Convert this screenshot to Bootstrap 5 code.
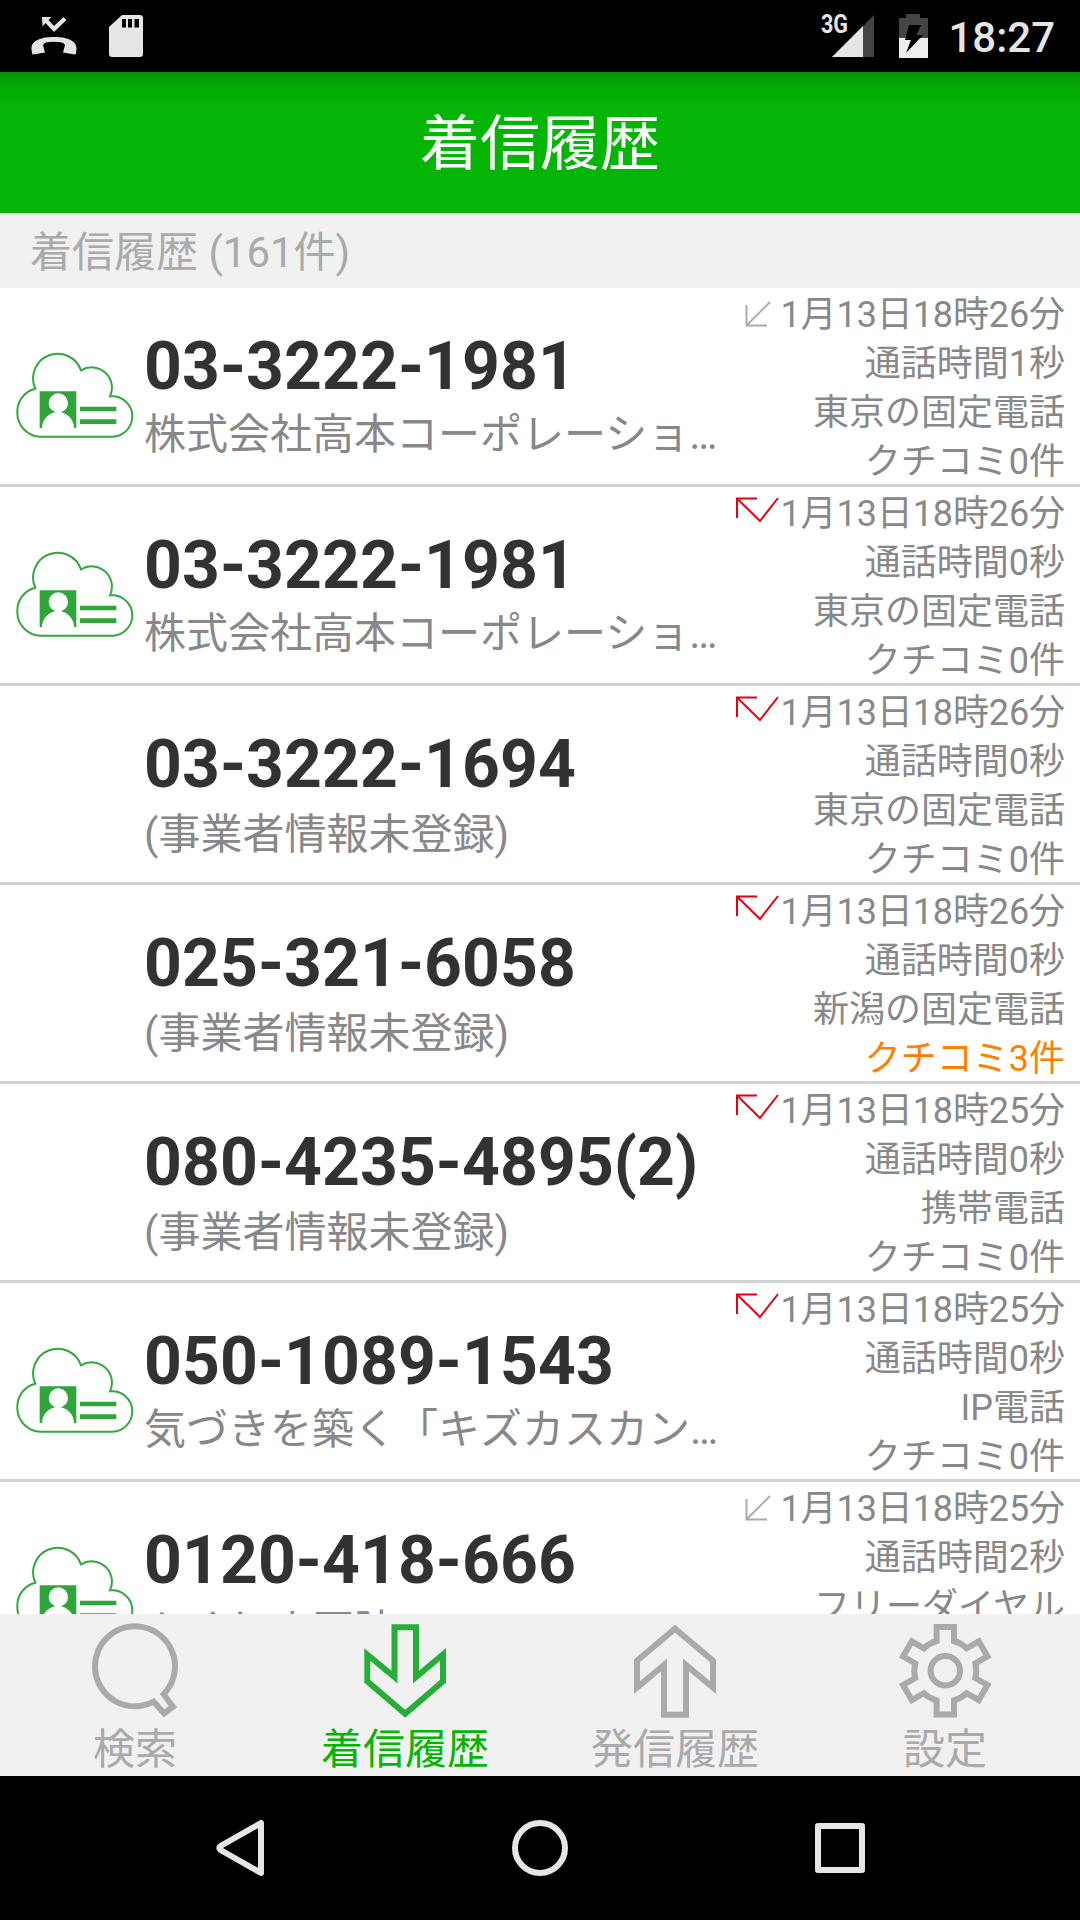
<!DOCTYPE html>
<html lang="ja">
<head>
<meta charset="utf-8">
<meta name="viewport" content="width=device-width, initial-scale=1">
<title>着信履歴</title>
<link href="https://cdn.jsdelivr.net/npm/bootstrap@5.3.0/dist/css/bootstrap.min.css" rel="stylesheet">
<style>
  body { font-family: Roboto, "Noto Sans CJK JP", sans-serif; background: #fff; }
  svg { display: block; flex: none; }
  .screen { width: 1080px; height: 1920px; }
  .statusbar { height: 72px; background: #000; color: #e5e5e5; padding: 0 25px 0 30px; }
  .sdcard { margin-left: 30px; }
  .battery { margin: 0 20px 0 23px; }
  .clock { font-size: 42px; font-weight: 500; line-height: 75px; height: 72px; }
  .titlebar { height: 141px; background: linear-gradient(#059105 0, #05a605 12px, #04b204 28px, #05b505 40px); color: #fff; font-size: 60px; line-height: 146px; }
  .section-label { height: 75px; background: #f1f1f1; color: #aaa; font-size: 42px; line-height: 79px; padding-left: 30px; }
  .calls { flex: 1 1 0; min-height: 0; }
  .call { height: 199px; border-bottom: 3px solid #d2d2d2; padding: 0 15px; }
  .thumb { width: 120px; padding-top: 63px; }
  .who { width: 587px; padding: 41px 0 0 9px; }
  .num { font-size: 66px; font-weight: 700; line-height: 76px; letter-spacing: .1px; color: #323232; white-space: nowrap; }
  .biz { font-size: 42px; line-height: 64px; color: #888; white-space: nowrap; }
  .biz.cut { line-height: 60px; }
  .meta { font-size: 36px; line-height: 49px; color: #888; white-space: nowrap; padding-top: 3px; }
  .when { letter-spacing: -.1px; }
  .dir { margin: -3px 1px 0 0; }
  .hot { color: #ff8000; }
  .tabs { height: 162px; background: #f1f1f1; color: #aaa; }
  .tabs a { flex: 1 1 0; color: inherit; font-size: 42px; line-height: 62px; padding-top: 9px; }
  .tabs a.on { color: #05b505; }
  .softkeys { height: 144px; background: #000; padding: 0 90px; }
</style>
<script src="https://cdn.jsdelivr.net/npm/bootstrap@5.3.0/dist/js/bootstrap.bundle.min.js"></script>
</head>
<body>
<svg width="0" height="0" class="position-absolute">
  <defs>
    <symbol id="cloud" viewBox="45 210 360 270">
      <path d="M106 323A73.900 73.900 0 1 1 243 268A61 61 0 0 1 330 346A61 60 0 0 1 397 406A61 61 0 0 1 337 467H122A71 71 0 0 1 52 395A71 71 0 0 1 106 323Z" fill="#fff" stroke="#33a83d" stroke-width="6"/>
      <path d="M119 331H229V441H222A48 48 0 0 0 126 441H119ZM240 377H349V391H240ZM240 415H349V429H240Z" fill="#2fa53a"/>
      <circle cx="175" cy="366" r="29" fill="#fff"/>
    </symbol>
    <symbol id="incoming" viewBox="0 0 44 40"><path d="M11.500 17V37.500H32M12 37L35 14" fill="none" stroke="#aaa" stroke-width="1.900"/></symbol>
    <symbol id="missed" viewBox="0 0 44 40"><path d="M2 31V11.500H22M2 11.500L25 34L43 11" fill="none" stroke="#e60012" stroke-width="2"/></symbol>
  </defs>
</svg>
<div class="screen d-flex flex-column overflow-hidden">
  <header class="statusbar d-flex align-items-center">
    <svg width="48" height="72" viewBox="0 0 48 72" fill="#e5e5e5"><path d="M12 17H21.500L18.500 20L24 26L33.500 17L36.500 20L24 32L15.500 23L12.500 26.500Z"/><path d="M1.500 49C1 40 12 37 24 37S47 40 46.500 49L46 53Q46 54.500 44.500 54.500L33 52.500L35 45Q34 41.700 24 41.700T13 45L15 52.500L3.500 54.500Q2 54.500 2 53Z"/></svg>
    <svg width="36" height="72" viewBox="0 0 36 72" class="sdcard me-auto"><path d="M14 15H32Q35 15 35 18V54Q35 57 32 57H4Q1 57 1 54V27Z" fill="#e5e5e5"/><path d="M14 19H18V27.500H14ZM20 19H24V27.500H20ZM26.500 19H31V27.500H26.500Z"/></svg>
    <svg width="56" height="72" viewBox="0 0 56 72"><path d="M12 57L54 15V57Z" fill="#444"/><path d="M12 57L43 26V57Z" fill="#e5e5e5"/><text x="1" y="33" font-family="Roboto" font-weight="700" font-size="25" textLength="27" lengthAdjust="spacingAndGlyphs" fill="#e5e5e5">3G</text></svg>
    <svg width="29" height="72" viewBox="0 0 29 72" class="battery"><path d="M0 38V18H7V14H21V18H29V38Z" fill="#444"/><path d="M0 38H29V58H0Z" fill="#eee"/><path d="M10 25H22L17.500 35H24L7 53L12 40H6Z" fill="#000"/></svg>
    <span class="clock">18:27</span>
  </header>
  <h1 class="titlebar text-center fw-normal mb-0">着信履歴</h1>
  <div class="section-label">着信履歴 (161件)</div>
  <main class="calls overflow-hidden">
    <article class="call d-flex">
      <div class="thumb"><svg width="120" height="90"><use href="#cloud"/></svg></div>
      <div class="who"><div class="num">03-3222-1981</div><div class="biz cut">株式会社高本コーポレーショ…</div></div>
      <div class="meta ms-auto text-end"><div class="when d-flex"><svg class="dir" width="44" height="40"><use href="#incoming"/></svg>1月13日18時26分</div><div>通話時間1秒</div><div>東京の固定電話</div><div>クチコミ0件</div></div>
    </article>
    <article class="call d-flex">
      <div class="thumb"><svg width="120" height="90"><use href="#cloud"/></svg></div>
      <div class="who"><div class="num">03-3222-1981</div><div class="biz cut">株式会社高本コーポレーショ…</div></div>
      <div class="meta ms-auto text-end"><div class="when d-flex"><svg class="dir" width="44" height="40"><use href="#missed"/></svg>1月13日18時26分</div><div>通話時間0秒</div><div>東京の固定電話</div><div>クチコミ0件</div></div>
    </article>
    <article class="call d-flex">
      <div class="thumb"></div>
      <div class="who"><div class="num">03-3222-1694</div><div class="biz">(事業者情報未登録)</div></div>
      <div class="meta ms-auto text-end"><div class="when d-flex"><svg class="dir" width="44" height="40"><use href="#missed"/></svg>1月13日18時26分</div><div>通話時間0秒</div><div>東京の固定電話</div><div>クチコミ0件</div></div>
    </article>
    <article class="call d-flex">
      <div class="thumb"></div>
      <div class="who"><div class="num">025-321-6058</div><div class="biz">(事業者情報未登録)</div></div>
      <div class="meta ms-auto text-end"><div class="when d-flex"><svg class="dir" width="44" height="40"><use href="#missed"/></svg>1月13日18時26分</div><div>通話時間0秒</div><div>新潟の固定電話</div><div class="hot">クチコミ3件</div></div>
    </article>
    <article class="call d-flex">
      <div class="thumb"></div>
      <div class="who"><div class="num">080-4235-4895(2)</div><div class="biz">(事業者情報未登録)</div></div>
      <div class="meta ms-auto text-end"><div class="when d-flex"><svg class="dir" width="44" height="40"><use href="#missed"/></svg>1月13日18時25分</div><div>通話時間0秒</div><div>携帯電話</div><div>クチコミ0件</div></div>
    </article>
    <article class="call d-flex">
      <div class="thumb"><svg width="120" height="90"><use href="#cloud"/></svg></div>
      <div class="who"><div class="num">050-1089-1543</div><div class="biz cut">気づきを築く「キズカスカン…</div></div>
      <div class="meta ms-auto text-end"><div class="when d-flex"><svg class="dir" width="44" height="40"><use href="#missed"/></svg>1月13日18時25分</div><div>通話時間0秒</div><div>IP電話</div><div>クチコミ0件</div></div>
    </article>
    <article class="call d-flex">
      <div class="thumb"><svg width="120" height="90"><use href="#cloud"/></svg></div>
      <div class="who"><div class="num">0120-418-666</div><div class="biz">ふくしま医院</div></div>
      <div class="meta ms-auto text-end"><div class="when d-flex"><svg class="dir" width="44" height="40"><use href="#incoming"/></svg>1月13日18時25分</div><div>通話時間2秒</div><div>フリーダイヤル</div><div>クチコミ0件</div></div>
    </article>
  </main>
  <nav class="tabs d-flex">
    <a class="d-flex flex-column align-items-center text-decoration-none"><svg width="96" height="96" viewBox="0.800 -0.700 96 96" fill="none" stroke="#aaa" stroke-width="6"><path d="M67.500 78A40 40 0 1 1 77.500 70.500L86.700 83L78 89.700Z"/></svg><span>検索</span></a>
    <a class="on d-flex flex-column align-items-center text-decoration-none"><svg width="96" height="96" viewBox="0 0 96 96" fill="none" stroke="#27ae3a" stroke-width="6"><path d="M37.500 4.300H59V54L86 31.500V58.300L48.200 90.800L10.300 58.300V31.500L37.500 54Z"/></svg><span>着信履歴</span></a>
    <a class="d-flex flex-column align-items-center text-decoration-none"><svg width="96" height="96" viewBox="0 0 96 96" fill="none" stroke="#aaa" stroke-width="6"><path d="M37 91.700H59V42L86 64.500V37.700L48 5.700L10 37.700V64.500L37 42Z"/></svg><span>発信履歴</span></a>
    <a class="d-flex flex-column align-items-center text-decoration-none"><svg width="96" height="96" viewBox="-48.300 -47.700 96 96" fill="none" stroke="#aaa" stroke-width="6"><circle r="14.700"/><path d="M-8.700 -29.700V-43.700H8.700V-29.700A31 31 0 0 1 21.400 -22.400L33.500 -29.400L42.200 -14.300L30.050 -7.300A31 31 0 0 1 30.050 7.300L42.200 14.300L33.500 29.400L21.400 22.400A31 31 0 0 1 8.700 29.700V43.700H-8.700V29.700A31 31 0 0 1 -21.400 22.400L-33.500 29.400L-42.200 14.300L-30.050 7.300A31 31 0 0 1 -30.050 -7.300L-42.200 -14.300L-33.500 -29.400L-21.400 -22.400A31 31 0 0 1 -8.700 -29.700Z"/></svg><span>設定</span></a>
  </nav>
  <footer class="softkeys d-flex align-items-center justify-content-around">
    <svg width="60" height="60" viewBox="0 0 60 60" fill="none" stroke="#e6e6e6" stroke-width="6" stroke-linejoin="round"><path d="M51 5V55L10.500 32Q8 30 10.500 28Z"/></svg>
    <svg width="60" height="60" viewBox="0 0 60 60" fill="none" stroke="#e6e6e6" stroke-width="6"><circle cx="30" cy="30" r="25"/></svg>
    <svg width="60" height="60" viewBox="0 0 60 60" fill="none" stroke="#e6e6e6" stroke-width="6" stroke-linejoin="round"><path d="M8 8H52V52H8Z"/></svg>
  </footer>
</div>
</body>
</html>
